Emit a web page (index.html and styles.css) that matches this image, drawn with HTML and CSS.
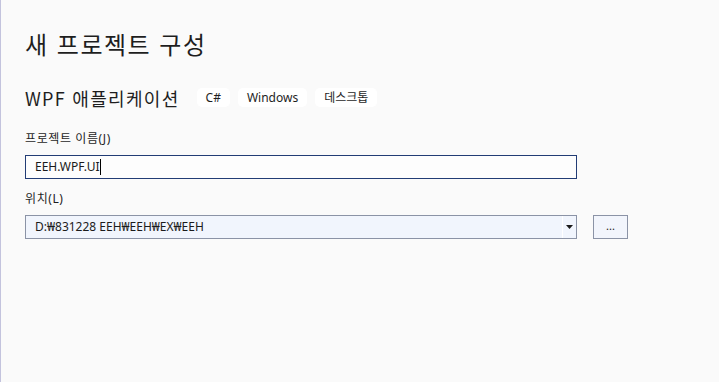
FILE: index.html
```html
<!DOCTYPE html>
<html lang="ko">
<head>
<meta charset="utf-8">
<link rel="stylesheet" href="styles.css">
</head>
<body>
<div class="page">
  <h1 class="title">새 프로젝트 구성</h1>
  <div class="template-row">
    <span class="template-name">WPF 애플리케이션</span>
    <span class="tags">
      <span class="tag">C#</span>
      <span class="tag">Windows</span>
      <span class="tag">데스크톱</span>
    </span>
  </div>
  <div class="field-label">프로젝트 이름(J)</div>
  <div class="input">EEH.WPF.UI<span class="caret"></span></div>
  <div class="field-label">위치(L)</div>
  <div class="loc-row">
    <div class="combo">
      <span class="combo-text">D:₩831228 EEH₩EEH₩EX₩EEH</span>
      <span class="combo-btn"><svg width="7" height="4" viewBox="0 0 7 4"><path d="M0 0H7L3.5 4Z" fill="#1a1a1a"/></svg></span>
    </div>
    <div class="browse">...</div>
  </div>
</div>
</body>
</html>
```

FILE: styles.css
```css
html, body {
  margin: 0;
  padding: 0;
  height: 100%;
}
body {
  background: #fafafa;
  font-family: "Noto Sans", "Noto Sans CJK KR", sans-serif;
  color: #1b1b1b;
}
.page {
  box-sizing: border-box;
  height: 100%;
  border-left: 1px solid #c3c3dd;
  padding: 28px 0 0 24px;
  display: flex;
  flex-direction: column;
  align-items: flex-start;
}
.title {
  margin: 0;
  font-family: "Noto Sans CJK KR", sans-serif;
  font-weight: 400;
  font-size: 24px;
  line-height: 32px;
  letter-spacing: 1.5px;
  color: #1e1e1e;
}
.template-row {
  margin-top: 28px;
  display: flex;
  align-items: center;
  height: 19px;
}
.template-name {
  font-family: "Noto Sans CJK KR", sans-serif;
  font-size: 18px;
  line-height: 20px;
  letter-spacing: 1.3px;
  color: #1e1e1e;
}
.tags {
  display: flex;
  gap: 8px;
  margin-left: 17px;
}
.tag {
  background: #ffffff;
  border-radius: 5px;
  height: 19px;
  padding: 0 9px;
  font-size: 12px;
  line-height: 19px;
  color: #1e1e1e;
}
.field-label {
  margin-top: 24px;
  font-size: 12px;
  line-height: 16px;
  letter-spacing: 0.6px;
  color: #1e1e1e;
}
.input {
  box-sizing: border-box;
  margin-top: 8px;
  width: 552px;
  height: 24px;
  border: 1px solid #223c75;
  background: #fdfdfd;
  padding-left: 9px;
  font-size: 12px;
  line-height: 22px;
  display: flex;
  align-items: center;
}
.caret {
  display: inline-block;
  width: 1px;
  height: 16px;
  background: #000;
  margin-left: 1px;
}
.input + .field-label {
  margin-top: 12px;
}
.loc-row {
  margin-top: 8px;
  display: flex;
  gap: 16px;
}
.combo {
  box-sizing: border-box;
  width: 552px;
  height: 24px;
  border: 1px solid #8b93a6;
  background: #f1f5fd;
  display: flex;
  align-items: stretch;
}
.combo-text {
  flex: 1;
  padding-left: 9px;
  font-size: 12px;
  line-height: 22px;
}
.combo-btn {
  width: 13px;
  border-left: 1px solid #ffffff;
  display: flex;
  align-items: center;
  justify-content: center;
}
.browse {
  box-sizing: border-box;
  width: 35px;
  height: 24px;
  border: 1px solid #8b93a6;
  background: #f2f5fc;
  font-size: 11px;
  line-height: 20px;
  text-align: center;
}
```
